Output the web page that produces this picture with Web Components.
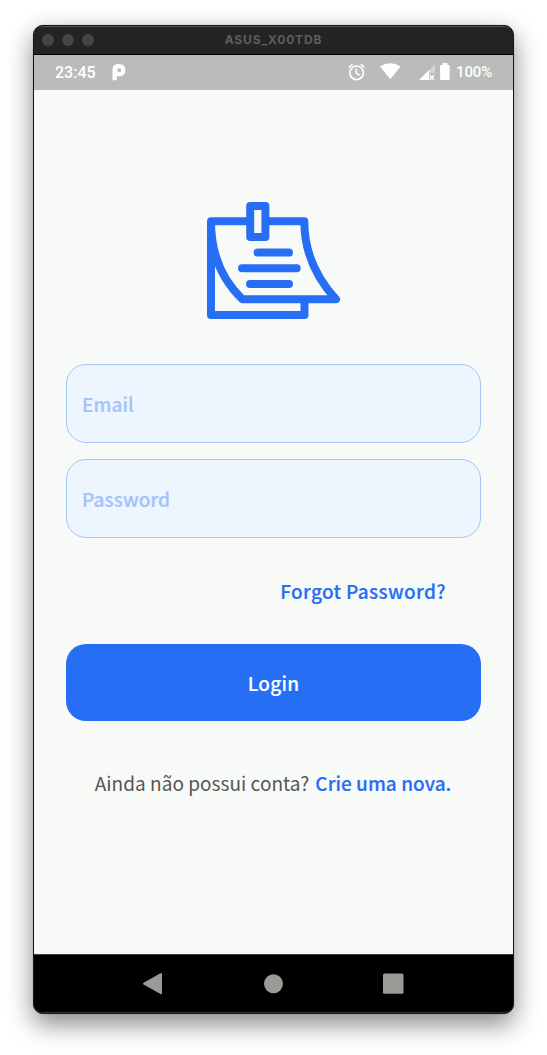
<!DOCTYPE html>
<html lang="pt-BR">
<head>
<meta charset="utf-8">
<title>ASUS_X00TDB</title>
<style>
html,body{margin:0;height:100%;background:#fff;overflow:hidden}
body{font-family:"Noto Sans CJK JP","Noto Sans CJK SC",sans-serif}
</style>
</head>
<body>
<device-window label="ASUS_X00TDB">
  <status-bar time="23:45" battery="100%"></status-bar>
  <login-screen>
    <note-logo></note-logo>
    <text-field style="--gap:45px;--track:.08px">Email</text-field>
    <text-field style="--gap:16px;--track:.08px">Password</text-field>
    <text-link slot="forgot">Forgot Password?</text-link>
    <primary-button slot="action">Login</primary-button>
    <sign-up slot="foot">Ainda não possui conta?<text-link slot="link" style="--track:.04px">Crie uma nova.</text-link></sign-up>
  </login-screen>
  <nav-bar></nav-bar>
</device-window>
<script>
const define = (name, html) => customElements.define(name, class extends HTMLElement {
  connectedCallback() {
    if (this.shadowRoot) return;
    const root = this.attachShadow({mode: 'open'});
    const t = document.createElement('template');
    t.innerHTML = html.replace(/\{(\w+)\}/g, (_, k) => this.getAttribute(k) || '');
    root.append(t.content.cloneNode(true));
  }
});

define('device-window', `<style>
:host{display:flex;flex-direction:column;box-sizing:border-box;width:481px;height:989px;margin:25px 0 0 33px;border:1px solid #161716;border-radius:10px;overflow:hidden;background:#000;box-shadow:0 0 1px rgba(0,0,0,.35),0 10px 26px rgba(0,0,0,.48)}
header{height:29px;box-sizing:border-box;flex:none;display:grid;grid-template-columns:1fr auto 1fr;align-items:center;background:#242424;border-top:1px solid #555;border-bottom:1px solid #000;border-radius:9px 9px 0 0}
.dots{display:flex;gap:8px;padding-left:8px;margin-top:-2px}
i{width:12px;height:12px;border-radius:50%;background:#464646}
b{font:700 12px/26px Inter,sans-serif;color:#5d5d5d;letter-spacing:.85px;margin-top:-2px}
</style><header><div class="dots"><i></i><i></i><i></i></div><b>{label}</b></header><slot></slot>`);

define('status-bar', `<style>
:host{display:flex;flex:none;height:35px;align-items:center;background:#babcb9;color:#fff;font:500 16px/35px Roboto,sans-serif}
svg{display:block;flex:none}
.time{margin-left:21px;width:57px}
.right{margin-left:auto;margin-right:20px;display:flex;align-items:center}
.pct{font-size:15px;width:37px;letter-spacing:-.1px;white-space:nowrap}
</style><span class="time">{time}</span>
<svg width="14" height="35" viewBox="0 0 14 35"><path fill="#fff" fill-rule="evenodd" d="M.5 25.200V14.500Q.5 9 7 9q6.400 0 6.400 6.200 0 6-6.400 6H4.700V25.200zM7.200 13.200a2 2 0 1 0 0 4 2 2 0 0 0 0-4z"/></svg>
<div class="right"><svg width="108" height="35" viewBox="348 55 108 35">
<g fill="none" stroke="#fff" stroke-width="1.600"><circle cx="356.600" cy="72.800" r="6.800"/><path d="M356.300 68.500v4.700l3.600 2.200M348.700 67.400l3.800-3.100M364.500 67.400l-3.800-3.100"/></g>
<path fill="#fff" d="M380 66.500q10.300-6.500 20.600 0L390.300 79.300z"/>
<path fill="#d3d5d2" d="M434.800 64.500v8.500h-5.500v-3.100z"/><path fill="#fff" d="M419 80l10.300-10.200V80z"/><path fill="none" stroke="#babcb9" stroke-width="3" d="M429.600 75l4.800 4.800M434.400 75l-4.800 4.800"/><path fill="none" stroke="#fff" stroke-width="1.500" d="M429.800 75.400l4.200 4.200M434 75.400l-4.200 4.200"/>
<path fill="#fff" d="M442.500 63h5v2h1.200q1 0 1 1v13q0 1-1 1h-7.600q-1 0-1-1V66q0-1 1-1h1.400z"/></svg><span class="pct">{battery}</span></div>`);

define('login-screen', `<style>
:host{display:flex;flex-direction:column;flex:1;box-sizing:border-box;padding:112px 32px 0;background:#f8faf8}
.forgot{display:flex;justify-content:flex-end;margin:38px 35px 0 0;height:30px}
.action{margin-top:38px}
.foot{margin-top:47px;display:flex;justify-content:center}
</style><slot></slot><div class="forgot"><slot name="forgot"></slot></div><div class="action"><slot name="action"></slot></div><div class="foot"><slot name="foot"></slot></div>`);

define('note-logo', `<style>:host{display:block;height:117px;margin-left:141px}svg{display:block}</style>
<svg width="134" height="117" viewBox="207 202 134 117" fill="none" stroke="#266ff5" stroke-width="8" stroke-linejoin="round">
<path d="M247 221.300H211V315H304.500V301M269 221.300H304.300C304.300 250 315.500 277 336 299.300H242.500C220 278 211 250 211 221.300"/>
<rect x="250.200" y="206" width="15.200" height="31"/><path stroke-linecap="round" d="M257.600 252.600H289M242 268.300h54.700M250 284h39"/></svg>`);

define('text-field', `<style>
:host{display:flex;align-items:center;flex:none;box-sizing:border-box;height:79px;margin-top:var(--gap);padding:0 15px 0;border:1.300px solid #a5c4f7;border-radius:20px;background:#edf5fe;color:#a4c3f9;font-size:19px;line-height:30px;font-weight:500;letter-spacing:var(--track);-webkit-text-stroke:.2px currentColor}
</style><span><slot></slot></span>`);

define('text-link', `<style>
:host{display:block;color:#266ff0;font-size:19px;line-height:30px;font-weight:500;letter-spacing:var(--track,.35px);white-space:nowrap;-webkit-text-stroke:.2px currentColor}
</style><slot></slot>`);

define('primary-button', `<style>
:host{display:flex;align-items:center;justify-content:center;height:77px;border-radius:20px;background:#266ff5;color:#fff;font-size:19px;line-height:30px;font-weight:500;letter-spacing:.25px;-webkit-text-stroke:.12px currentColor}
</style><span><slot></slot></span>`);

define('sign-up', `<style>
:host{display:flex;gap:6px;color:#555655;font-size:19px;line-height:30px;white-space:nowrap;letter-spacing:.04px;padding-right:1px}
</style><span><slot></slot></span><slot name="link"></slot>`);

define('nav-bar', `<style>
:host{display:block;flex:none;height:59px;box-sizing:border-box;border-top:1px solid #3c3e3c;border-bottom:1px solid #303130;border-radius:0 0 9px 9px;background:#000}
svg{display:block}
</style><svg width="479" height="57" viewBox="34 955 479 57" fill="#999b97"><path stroke="#999b97" stroke-width="2" stroke-linejoin="round" d="M144 983.700L161 974v19.200z"/><circle cx="273.500" cy="983.700" r="9.500"/><rect x="383" y="973.500" width="20.500" height="20.300" rx="1.500"/></svg>`);
</script>
</body>
</html>
